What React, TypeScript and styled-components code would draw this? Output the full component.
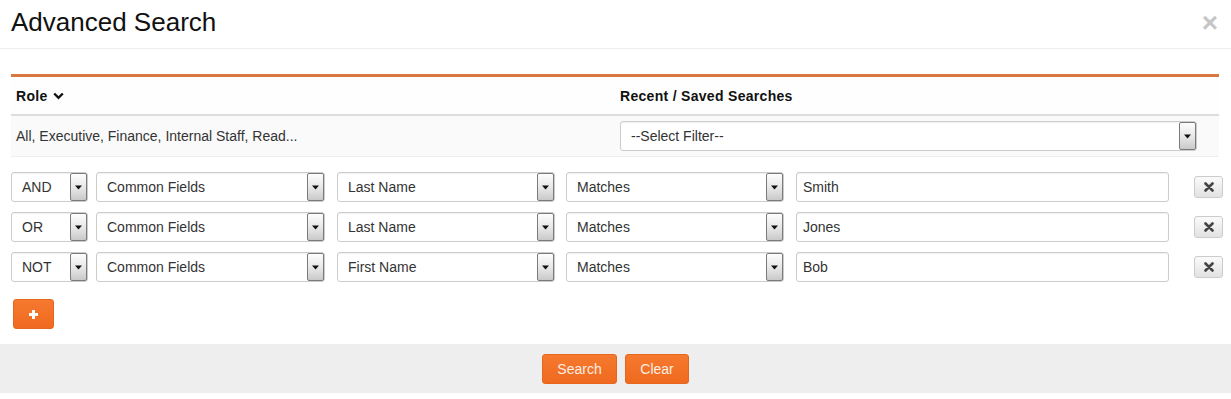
import React from 'react'
import styled, { createGlobalStyle } from 'styled-components'

const GlobalStyle = createGlobalStyle`
  html, body {
    margin: 0;
    padding: 0;
    background: #fff;
  }
  body {
    font-family: "Liberation Sans", Arial, sans-serif;
    font-size: 14px;
    color: #333;
  }
  * {
    box-sizing: border-box;
  }
`

const Modal = styled.div`
  width: 1231px;
  height: 399px;
  background: #fff;
`

const Header = styled.div`
  display: flex;
  align-items: center;
  justify-content: space-between;
  height: 49px;
  padding: 0 13px 3px 11px;
  border-bottom: 1px solid #eee;
`

const Title = styled.h4`
  margin: 0;
  font-size: 26px;
  font-weight: normal;
  color: #111;
`

const CloseButton = styled.span`
  font-size: 28px;
  font-weight: bold;
  line-height: 1;
  color: #c6c6c6;
  cursor: pointer;
`

const Body = styled.div`
  padding: 25px 12px 15px 11px;
`

const FilterTable = styled.div`
  border-top: 3px solid #d9773f;
`

const TableRow = styled.div<{ $head?: boolean }>`
  display: grid;
  grid-template-columns: 604px 1fr;
  align-items: center;
  height: ${(p) => (p.$head ? '39px' : '41px')};
  border-bottom: ${(p) => (p.$head ? '2px solid #ddd' : '1px solid #eee')};
  background: ${(p) => (p.$head ? '#fefefe' : '#fafafa')};
`

const HeadCell = styled.div`
  display: flex;
  align-items: center;
  gap: 5px;
  padding: 0 5px;
  font-size: 14px;
  font-weight: bold;
  letter-spacing: 0.3px;
  color: #111;
`

const Cell = styled.div`
  padding: 0 5px;
  font-size: 14px;
  color: #333;
`

const Criteria = styled.div`
  display: flex;
  flex-direction: column;
  gap: 10px;
  margin-top: 15px;
`

const CriteriaRow = styled.div`
  display: grid;
  grid-template-columns: 85px 241px 229px 230px 398px 29px;
  align-items: center;
`

const SelectBox = styled.div<{ $width: string }>`
  position: relative;
  display: flex;
  align-items: center;
  width: ${(p) => p.$width};
  height: 30px;
  padding: 0 10px;
  background: #fff;
  border: 1px solid #ccc;
  border-radius: 3px;
  box-shadow: inset 0 1px 1px rgba(0, 0, 0, 0.06);
  font-size: 14px;
  color: #333;
`

const ArrowBox = styled.span`
  position: absolute;
  top: 0;
  right: 0;
  width: 17px;
  height: 28px;
  display: flex;
  align-items: center;
  justify-content: center;
  border: 1px solid #7a7a7a;
  border-radius: 2px;
  background: linear-gradient(#fdfdfd, #e6e6e6 55%, #c9c9c9);
`

const TextInput = styled.input`
  width: 373px;
  height: 30px;
  padding: 0 6px;
  border: 1px solid #ccc;
  border-radius: 3px;
  box-shadow: inset 0 1px 1px rgba(0, 0, 0, 0.06);
  font-family: inherit;
  font-size: 14px;
  color: #333;
  outline: none;
`

const RemoveButton = styled.button`
  width: 29px;
  height: 22px;
  padding: 0;
  display: flex;
  align-items: center;
  justify-content: center;
  border: 1px solid #ccc;
  border-radius: 3px;
  background: linear-gradient(#fafafa, #e2e2e2);
  cursor: pointer;
`

const OrangeButton = styled.button<{ $width: string }>`
  width: ${(p) => p.$width};
  height: 30px;
  padding: 0;
  display: flex;
  align-items: center;
  justify-content: center;
  border: 1px solid #e8661c;
  border-radius: 3px;
  background: linear-gradient(#f5792f, #ef6a1f);
  font-family: inherit;
  font-size: 14px;
  color: #fdeee4;
  cursor: pointer;
`

const AddRow = styled.div`
  margin-top: 17px;
  padding-left: 2px;
`

const Footer = styled.div`
  display: flex;
  justify-content: center;
  gap: 8px;
  height: 49px;
  padding-top: 10px;
  background: #eee;
`

const Caret = () => (
  <svg width="8" height="5" viewBox="0 0 8 5">
    <path d="M0 0.5 H7 L3.5 4.5 Z" fill="#111" />
  </svg>
)

const Chevron = () => (
  <svg width="11" height="8" viewBox="0 0 11 8">
    <path d="M1.2 1.5 L5.5 5.8 L9.8 1.5" fill="none" stroke="#111" strokeWidth="2.4" />
  </svg>
)

const Times = () => (
  <svg width="10" height="10" viewBox="0 0 10 10">
    <path d="M1.5 1.5 L8.5 8.5 M8.5 1.5 L1.5 8.5" stroke="#444" strokeWidth="2.6" strokeLinecap="round" />
  </svg>
)

const Plus = () => (
  <svg width="11" height="11" viewBox="0 0 11 11">
    <path d="M5.5 1 V10 M1 5.5 H10" stroke="#fff" strokeWidth="3" />
  </svg>
)

const Select = ({ value, width }: { value: string; width: string }) => (
  <SelectBox $width={width}>
    {value}
    <ArrowBox>
      <Caret />
    </ArrowBox>
  </SelectBox>
)

const rows = [
  { op: 'AND', field: 'Last Name', value: 'Smith' },
  { op: 'OR', field: 'Last Name', value: 'Jones' },
  { op: 'NOT', field: 'First Name', value: 'Bob' },
]

const App = () => (
  <Modal>
    <GlobalStyle />
    <Header>
      <Title>Advanced Search</Title>
      <CloseButton>×</CloseButton>
    </Header>
    <Body>
      <FilterTable>
        <TableRow $head>
          <HeadCell>
            Role <Chevron />
          </HeadCell>
          <HeadCell>Recent / Saved Searches</HeadCell>
        </TableRow>
        <TableRow>
          <Cell>All, Executive, Finance, Internal Staff, Read...</Cell>
          <Cell>
            <Select value="--Select Filter--" width="577px" />
          </Cell>
        </TableRow>
      </FilterTable>

      <Criteria>
        {rows.map((row) => (
          <CriteriaRow key={row.op}>
            <Select value={row.op} width="77px" />
            <Select value="Common Fields" width="229px" />
            <Select value={row.field} width="218px" />
            <Select value="Matches" width="218px" />
            <TextInput defaultValue={row.value} />
            <RemoveButton>
              <Times />
            </RemoveButton>
          </CriteriaRow>
        ))}
      </Criteria>

      <AddRow>
        <OrangeButton $width="41px">
          <Plus />
        </OrangeButton>
      </AddRow>
    </Body>
    <Footer>
      <OrangeButton $width="75px">Search</OrangeButton>
      <OrangeButton $width="64px">Clear</OrangeButton>
    </Footer>
  </Modal>
)

export default App
